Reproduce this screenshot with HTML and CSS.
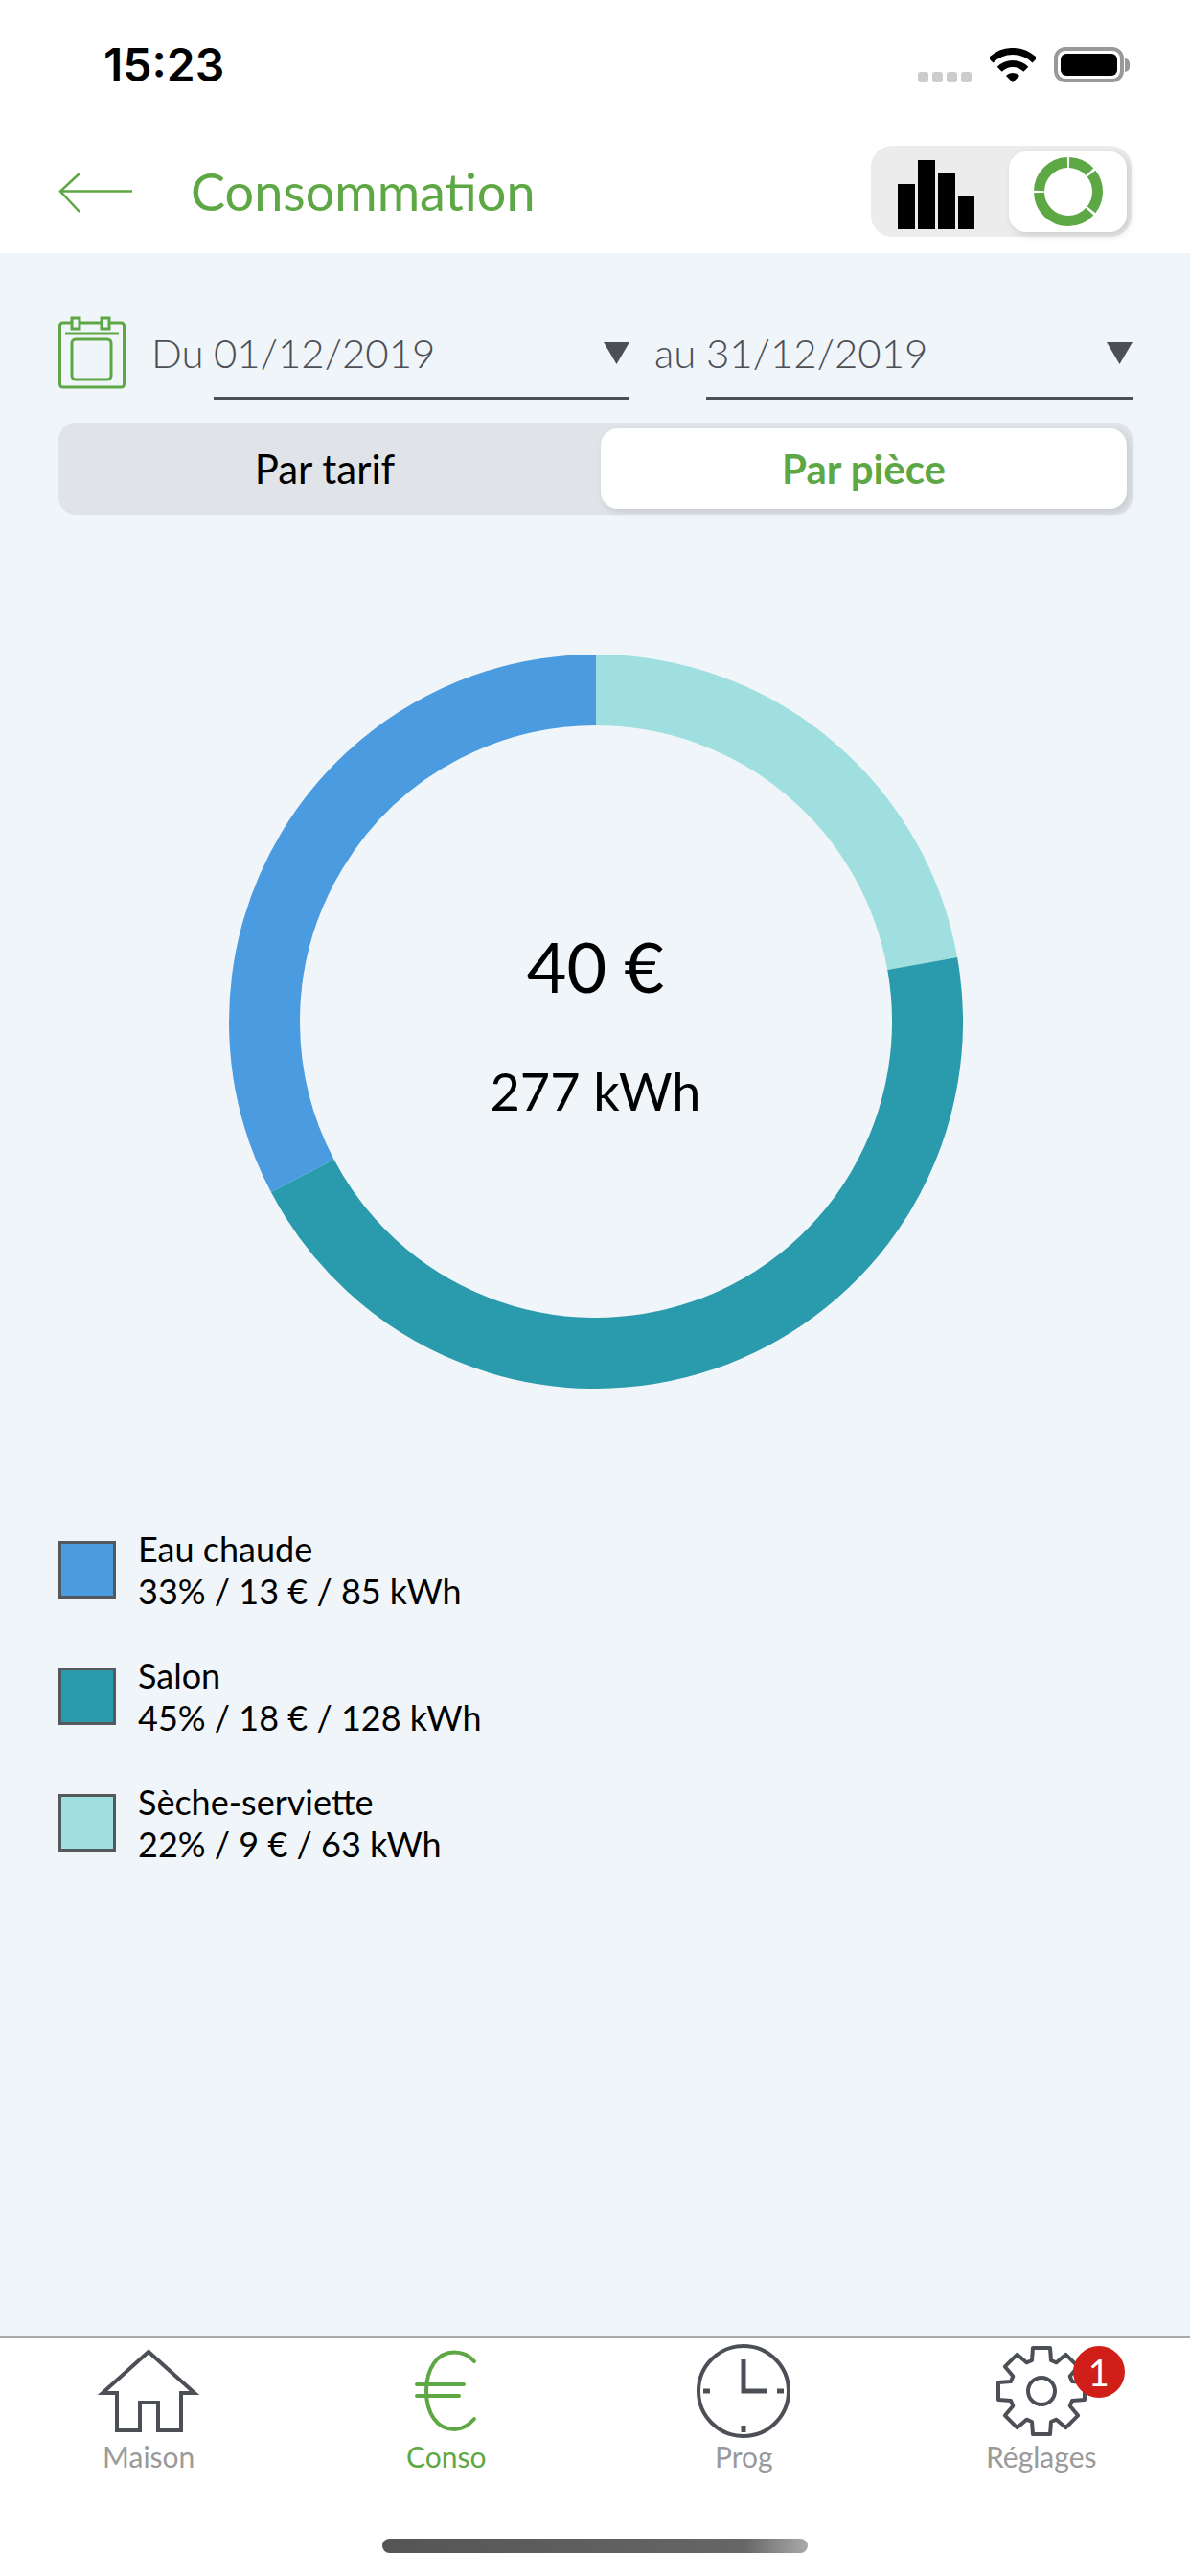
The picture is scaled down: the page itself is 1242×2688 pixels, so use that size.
FILE: index.html
```
<!DOCTYPE html>
<html lang="fr">
  <head>
    <meta charset="utf-8" />
    <title>Consommation</title>
    <meta name="viewport" content="width=device-width, initial-scale=1" />
    <link rel="stylesheet" href="styles.css">
  </head>
  <body>
    <div class="status-bar">
      <span class="clock-time">15:23</span>
      <div class="status-icons">
        <div class="signal"><i></i><i></i><i></i><i></i></div>
        <svg class="wifi" width="48" height="36" viewBox="0 0 48 36">
          <path d="M1 13A32.5 32.5 0 0 1 47 13" fill="none" stroke="#000" stroke-width="7" />
          <path d="M10.2 22.2A19.5 19.5 0 0 1 37.8 22.2" fill="none" stroke="#000" stroke-width="7" />
          <path d="M24 36L16.9 28.9A10 10 0 0 1 31.1 28.9Z" fill="#000" />
        </svg>
        <div class="battery"><div class="battery-level"></div></div>
        <div class="battery-nub"></div>
      </div>
    </div>

    <header class="top-bar">
      <svg class="back-arrow" width="78" height="44" viewBox="0 0 78 44">
        <path d="M77 20.500H3M22 2L2 20.500L22 42" fill="none" stroke="#5da845" stroke-width="2.500" />
      </svg>
      <h1 class="page-title">Consommation</h1>
      <div class="view-toggle">
        <svg class="toggle-bars" width="80" height="72" viewBox="0 0 80 72">
          <rect x="0" y="25" width="18" height="47" />
          <rect x="21" y="0" width="18" height="72" />
          <rect x="42" y="13" width="18" height="59" />
          <rect x="63" y="37" width="17" height="35" />
        </svg>
        <div class="toggle-thumb">
          <svg width="72" height="72" viewBox="0 0 72 72">
            <circle class="toggle-donut" cx="36" cy="36" r="30.500" pathLength="360" />
          </svg>
        </div>
      </div>
    </header>

    <main class="content">
      <div class="date-row">
        <svg class="calendar" width="72" height="76" viewBox="0 0 72 76">
          <g fill="none" stroke="#5da845" stroke-width="3">
            <rect x="1.500" y="7" width="67" height="67" rx="3" />
            <rect x="14" y="2" width="8" height="11" fill="#f0f5f9" />
            <rect x="45" y="2" width="8" height="11" fill="#f0f5f9" />
            <path d="M7 18H63" />
            <rect x="14" y="24" width="41" height="42" rx="4" />
          </g>
        </svg>
        <span class="date-label">Du</span>
        <div class="date-field date-from">
          <span>01/12/2019</span>
          <i class="date-caret"></i>
        </div>
        <span class="date-label date-label-to">au</span>
        <div class="date-field date-to">
          <span>31/12/2019</span>
          <i class="date-caret"></i>
        </div>
      </div>

      <div class="segmented">
        <div class="segment">Par tarif</div>
        <div class="segment segment-active">Par pièce</div>
      </div>

      <div class="donut">
        <svg width="766" height="766" viewBox="0 0 766 766">
          <g fill="none" stroke-width="74">
            <path d="M383 37A346 346 0 0 1 723.67 322.44" stroke="#a0dfdf" />
            <path d="M723.67 322.44A346 346 0 0 1 76.7 543.9" stroke="#2a9bac" />
            <path d="M76.7 543.9A346 346 0 0 1 383 37" stroke="#4a9be0" />
          </g>
        </svg>
        <div class="donut-label">
          <div class="donut-price">40 €</div>
          <div class="donut-energy">277 kWh</div>
        </div>
      </div>

      <ul class="legend">
        <li class="legend-row">
          <span class="swatch swatch-blue"></span>
          <div>Eau chaude<br />33% / 13 € / 85 kWh</div>
        </li>
        <li class="legend-row">
          <span class="swatch swatch-teal"></span>
          <div>Salon<br />45% / 18 € / 128 kWh</div>
        </li>
        <li class="legend-row">
          <span class="swatch swatch-light"></span>
          <div>Sèche-serviette<br />22% / 9 € / 63 kWh</div>
        </li>
      </ul>
    </main>

    <footer class="tab-bar">
      <nav class="tabs">
        <div class="tab">
          <div class="tab-icon">
            <svg width="110" height="92" viewBox="0 0 110 92">
              <path d="M55 5L7 48H22V87H46V58H65V87H89V48H103Z" fill="none" stroke="#4c5056" stroke-width="4" />
            </svg>
          </div>
          <span>Maison</span>
        </div>
        <div class="tab tab-active">
          <div class="tab-icon">
            <svg width="70" height="92" viewBox="0 0 70 92">
              <path d="M64 15C58 8 51 5.500 43 5.500C25 5.500 14 23 14 46C14 69 25 86 43 86C51 86 58 82 64 75M4 39H53M4 51H48" fill="none" stroke="#5da845" stroke-width="4" stroke-linecap="round" />
            </svg>
          </div>
          <span>Conso</span>
        </div>
        <div class="tab">
          <div class="tab-icon">
            <svg width="100" height="100" viewBox="0 0 100 100">
              <g fill="none" stroke="#4c5056">
                <circle cx="50" cy="50" r="47" stroke-width="4" />
                <path d="M50 17V50H75" stroke-width="5" />
                <path d="M8 50H15M85 50H92M50 86V93" stroke-width="5" />
              </g>
            </svg>
          </div>
          <span>Prog</span>
        </div>
        <div class="tab">
          <div class="tab-icon">
            <svg width="100" height="100" viewBox="-50 -50 100 100">
              <g fill="none" stroke="#4c5056" stroke-width="4" stroke-linejoin="round">
                <path d="M-10 -32L-9 -45H9L10 -32L15.560 -29.700L25.460 -38.180L38.180 -25.460L29.700 -15.560L32 -10L45 -9V9L32 10L29.700 15.560L38.180 25.460L25.460 38.180L15.560 29.700L10 32L9 45H-9L-10 32L-15.560 29.700L-25.460 38.180L-38.180 25.460L-29.700 15.560L-32 10L-45 9V-9L-32 -10L-29.700 -15.560L-38.180 -25.460L-25.460 -38.180L-15.560 -29.700Z" />
                <circle r="14" />
              </g>
            </svg>
            <span class="badge">1</span>
          </div>
          <span>Réglages</span>
        </div>
      </nav>
      <div class="home-indicator"></div>
    </footer>
  </body>
</html>
```

FILE: styles.css
```
* {
  box-sizing: border-box;
}
html,
body {
  margin: 0;
  height: 100%;
}
body {
  width: 1242px;
  height: 2688px;
  display: flex;
  flex-direction: column;
  background: #fff;
  color: #000;
  font-family: "Lato", "Open Sans", sans-serif;
}

/* status bar */
.status-bar {
  height: 132px;
  padding: 40px 63px 0 108px;
  display: flex;
  justify-content: space-between;
  align-items: flex-start;
}
.clock-time {
  font-family: "Inter", "Liberation Sans", sans-serif;
  font-size: 48px;
  font-weight: 600;
  line-height: 56px;
}
.status-icons {
  display: flex;
  align-items: flex-end;
  padding-top: 9px;
  height: 46px;
}
.signal {
  display: flex;
  gap: 4px;
  margin-right: 19px;
}
.signal i {
  width: 11px;
  height: 11px;
  border-radius: 3px;
  background: #ccc;
}
.battery {
  width: 73px;
  height: 37px;
  margin-left: 19px;
  padding: 3px;
  border: 4px solid #999;
  border-radius: 12px;
}
.battery-level {
  height: 100%;
  background: #000;
  border-radius: 6px;
}
.battery-nub {
  width: 5px;
  height: 14px;
  margin: 0 0 11px 1px;
  background: #999;
  border-radius: 0 5px 5px 0;
}

/* header */
.top-bar {
  height: 132px;
  padding: 20px 61px 17px;
  display: flex;
  align-items: center;
}
.back-arrow {
  flex: none;
  margin: 2px 60px 0 0;
}
.page-title {
  margin: 0;
  flex: 1;
  color: #5da845;
  font-size: 54px;
  font-weight: 400;
  line-height: 64px;
  padding-top: 1px;
}
.view-toggle {
  width: 272px;
  height: 95px;
  padding: 6px 5px 5px 28px;
  display: flex;
  align-items: center;
  justify-content: space-between;
  background: #ececec;
  border-radius: 22px;
}
.toggle-bars {
  margin-top: 5px;
}
.toggle-thumb {
  width: 123px;
  height: 84px;
  display: flex;
  align-items: center;
  justify-content: center;
  background: #fff;
  border-radius: 18px;
  box-shadow: 3px 3px 8px rgba(0, 0, 0, 0.14);
}
.toggle-donut {
  fill: none;
  stroke: #5da845;
  stroke-width: 11;
  stroke-dasharray: 45 5 76 5 135 4 86 4;
  stroke-dashoffset: -2;
  transform: rotate(-90deg);
  transform-origin: 36px 36px;
}

/* main */
.content {
  flex: 1;
  padding: 66px 60px 0 61px;
  background: #f0f5f9;
}
.date-row {
  display: flex;
  align-items: flex-end;
  height: 87px;
  color: #4c5056;
  font-size: 42px;
  font-weight: 300;
}
.calendar {
  flex: none;
  margin: 0 25px 11px 0;
  align-self: flex-start;
}
.date-label {
  width: 65px;
  line-height: 50px;
  padding-bottom: 24px;
}
.date-label-to {
  width: 54px;
  margin-left: 26px;
}
.date-field {
  height: 74px;
  display: flex;
  align-items: flex-start;
  justify-content: space-between;
  border-bottom: 3px solid #4c5056;
  line-height: 50px;
}
.date-from {
  width: 434px;
}
.date-to {
  width: 445px;
}
.date-caret {
  width: 27px;
  height: 23px;
  margin-top: 14px;
  background: #4c5056;
  clip-path: polygon(0 0, 100% 0, 50% 100%);
}

.segmented {
  margin-top: 24px;
  height: 96px;
  padding: 6px 6px 6px 0;
  display: flex;
  background: #e0e4e8;
  border-radius: 18px;
}
.segment {
  display: flex;
  align-items: center;
  justify-content: center;
  font-size: 42px;
}
.segment:first-child {
  width: 566px;
  padding-right: 10px;
}
.segment-active {
  flex: 1;
  color: #5da845;
  font-weight: 700;
  background: #fff;
  border-radius: 18px;
  box-shadow: 3px 3px 8px rgba(0, 0, 0, 0.12);
}

.donut {
  width: 766px;
  height: 766px;
  margin: 146px auto 0;
  display: grid;
}
.donut > * {
  grid-area: 1 / 1;
}
.donut-label {
  padding-top: 282px;
  text-align: center;
}
.donut-price {
  font-size: 72px;
  line-height: 86px;
}
.donut-energy {
  margin-top: 56px;
  font-size: 54px;
  line-height: 64px;
}

.legend {
  margin: 145px 0 0;
  padding: 0;
  list-style: none;
  display: flex;
  flex-direction: column;
  gap: 44px;
  font-size: 36px;
  line-height: 44px;
}
.legend-row {
  display: flex;
  align-items: center;
  gap: 23px;
}
.swatch {
  flex: none;
  width: 60px;
  height: 60px;
  border: 3px solid #55585c;
}
.swatch-blue {
  background: #4a9be0;
}
.swatch-teal {
  background: #2a9bac;
}
.swatch-light {
  background: #a0dfdf;
}

/* tabs */
.tab-bar {
  height: 250px;
  display: flex;
  flex-direction: column;
  border-top: 2px solid #aaa;
}
.tabs {
  padding-top: 5px;
  display: grid;
  grid-template-columns: repeat(4, 1fr);
}
.tab {
  display: flex;
  flex-direction: column;
  align-items: center;
  color: #9a9a9a;
  font-size: 30px;
  line-height: 36px;
}
.tab-active {
  color: #5da845;
}
.tab-icon {
  position: relative;
  height: 100px;
  display: flex;
  align-items: center;
}
.badge {
  position: absolute;
  top: 3px;
  left: 83px;
  width: 54px;
  height: 54px;
  background: #d01f18;
  border-radius: 50%;
  color: #fff;
  font-size: 38px;
  line-height: 54px;
  text-align: center;
}
.home-indicator {
  width: 444px;
  height: 15px;
  margin: auto auto 24px;
  border-radius: 8px;
  background: linear-gradient(90deg, #555 0%, #666 85%, #aaa 100%);
}
```
